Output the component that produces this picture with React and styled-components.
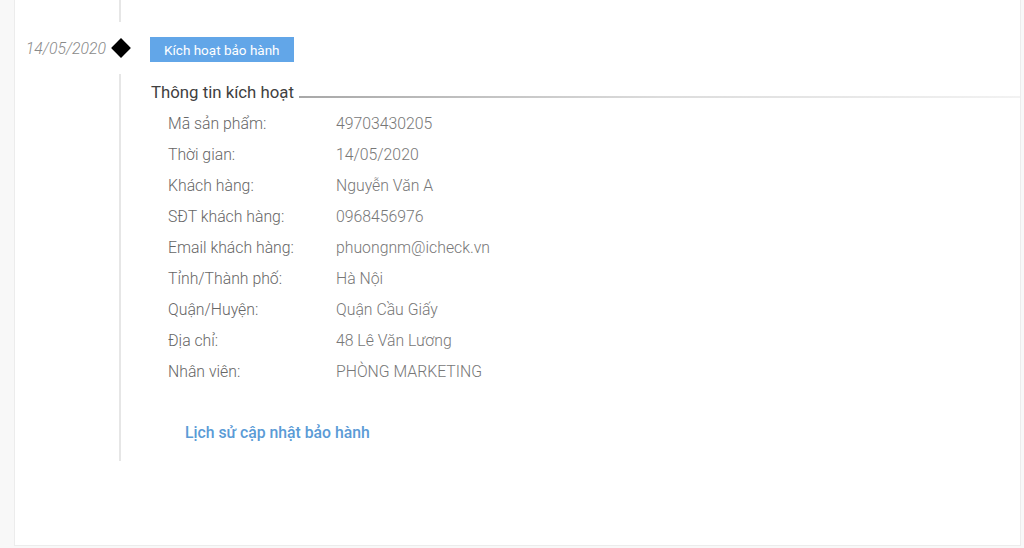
import React from 'react';
import styled, { createGlobalStyle } from 'styled-components';

const rows = [
  ['Mã sản phẩm:', '49703430205'],
  ['Thời gian:', '14/05/2020'],
  ['Khách hàng:', 'Nguyễn Văn A'],
  ['SĐT khách hàng:', '0968456976'],
  ['Email khách hàng:', 'phuongnm@icheck.vn'],
  ['Tỉnh/Thành phố:', 'Hà Nội'],
  ['Quận/Huyện:', 'Quận Cầu Giấy'],
  ['Địa chỉ:', '48 Lê Văn Lương'],
  ['Nhân viên:', 'PHÒNG MARKETING'],
];

const App = () => {
  return (
    <>
      <GlobalStyle />
      <Card>
        <TopLine />
        <EventHeader>
          <DateText>14/05/2020</DateText>
          <Marker />
          <ActionButton>Kích hoạt bảo hành</ActionButton>
        </EventHeader>
        <EventBody>
          <SectionTitle>Thông tin kích hoạt</SectionTitle>
          <InfoList>
            {rows.map(([label, value]) => (
              <InfoRow key={label}>
                <Label>{label}</Label>
                <Value>{value}</Value>
              </InfoRow>
            ))}
          </InfoList>
          <HistoryLink href="#">Lịch sử cập nhật bảo hành</HistoryLink>
        </EventBody>
      </Card>
    </>
  );
};

export default App;

// STYLED COMPONENTS
const GlobalStyle = createGlobalStyle`
  html, body {
    margin: 0;
    padding: 0;
    background: #f8f8f8;
    font-family: Roboto, "Noto Sans", Arial, sans-serif;
  }
`;

const Card = styled.div`
  margin-left: 14px;
  width: 1007px;
  height: 546px;
  box-sizing: border-box;
  background: #fff;
  border: 1px solid #ececec;
  border-top: none;
`;

const TopLine = styled.div`
  margin-left: 104px;
  width: 2px;
  height: 22px;
  background: #e6e6e6;
`;

const EventHeader = styled.div`
  display: flex;
  align-items: center;
  height: 52px;
`;

const DateText = styled.span`
  width: 91px;
  text-align: right;
  font-size: 15.8px;
  font-style: italic;
  font-weight: 300;
  color: #8a8a8a;
`;

const Marker = styled.span`
  display: flex;
  align-items: center;
  justify-content: center;
  width: 22px;
  height: 22px;
  margin-left: 4px;

  &::before {
    content: '';
    width: 14px;
    height: 14px;
    background: #000;
    transform: rotate(45deg);
  }
`;

const ActionButton = styled.button`
  margin-left: 18px;
  margin-top: 3px;
  height: 25px;
  padding: 0 14px;
  border: none;
  border-radius: 0;
  background: #62a6e8;
  color: #fff;
  font-family: Roboto, "Noto Sans", Arial, sans-serif;
  font-size: 13.5px;
  font-weight: 400;
  cursor: pointer;
`;

const EventBody = styled.div`
  margin-left: 104px;
  border-left: 2px solid #e6e6e6;
  padding: 8px 0 18px 30px;
`;

const SectionTitle = styled.div`
  display: flex;
  align-items: center;
  height: 20px;
  font-size: 16.8px;
  color: #404040;
  white-space: nowrap;

  &::after {
    content: '';
    flex: 1;
    height: 2px;
    margin: 9px 0 0 5px;
    background: linear-gradient(90deg, #a8a8a8 0%, #dcdcdc 50%, #f2f2f2 100%);
  }
`;

const InfoList = styled.div`
  margin-top: 6px;
  padding-left: 17px;
`;

const InfoRow = styled.div`
  display: flex;
  height: 31px;
  align-items: center;
  font-size: 15.8px;
  font-weight: 300;
  color: #666;
`;

const Label = styled.span`
  width: 168px;
`;

const Value = styled.span`
  color: #777;
`;

const HistoryLink = styled.a`
  display: block;
  margin: 36px 0 0 34px;
  line-height: 20px;
  font-size: 15.75px;
  font-weight: 500;
  color: #5b9bd6;
  text-decoration: none;
`;
